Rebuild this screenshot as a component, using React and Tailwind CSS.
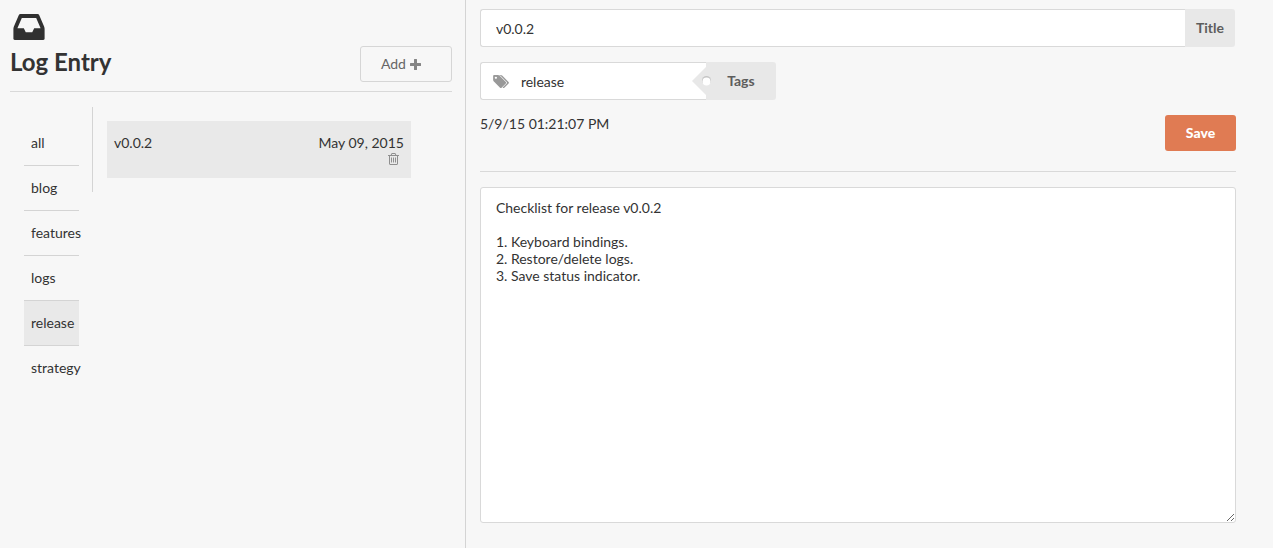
import { useState } from "react";

const TAGS = ["all", "blog", "features", "logs", "release", "strategy"];

const BODY = `Checklist for release v0.0.2

1. Keyboard bindings.
2. Restore/delete logs.
3. Save status indicator.`;

function InboxIcon({ className }) {
  return (
    <svg viewBox="0 128 1536 1280" fill="currentColor" aria-hidden="true" className={className}>
      <path d="M1023 832h316q-1-3-2.500-8t-2.500-8l-212-496h-708l-212 496q-1 2-2.500 8t-2.500 8h316l95 192h320zm513 30v482q0 26-19 45t-45 19h-1408q-26 0-45-19t-19-45v-482q0-62 25-123l238-552q10-25 36.500-42t52.500-17h832q26 0 52.500 17t36.500 42l238 552q25 61 25 123z" />
    </svg>
  );
}

function PlusIcon({ className }) {
  return (
    <svg viewBox="0 0 11 11" fill="currentColor" aria-hidden="true" className={className}>
      <path d="M4.500 0h2q.5 0 .5.500v3.500h3.500q.5 0 .5.500v2q0 .5-.5.500h-3.500v3.500q0 .5-.5.500h-2q-.5 0-.5-.5v-3.500h-3.500q-.5 0-.5-.5v-2q0-.5.5-.5h3.500v-3.500q0-.5.5-.5z" />
    </svg>
  );
}

function TagsIcon({ className }) {
  return (
    <svg viewBox="0 128 1835 1515" fill="currentColor" aria-hidden="true" className={className}>
      <path d="M448 448q0-53-37.500-90.500t-90.500-37.500-90.500 37.500-37.500 90.500 37.500 90.500 90.500 37.500 90.500-37.500 37.500-90.500zm1067 576q0 53-37 90l-491 492q-39 37-91 37-53 0-90-37l-715-716q-38-37-64.500-101t-26.500-117v-416q0-52 38-90t90-38h416q53 0 117 26.500t102 64.500l715 714q37 39 37 91zm320 0q0 53-37 90l-491 492q-39 37-91 37-36 0-59-14t-53-45l470-470q37-37 37-90 0-52-37-91l-715-714q-38-38-102-64.500t-117-26.500h224q53 0 117 26.500t102 64.500l715 714q37 39 37 91z" />
    </svg>
  );
}

function TrashIcon({ className }) {
  return (
    <svg viewBox="0 128 1408 1536" fill="currentColor" aria-hidden="true" className={className}>
      <path d="M512 736v576q0 14-9 23t-23 9h-64q-14 0-23-9t-9-23v-576q0-14 9-23t23-9h64q14 0 23 9t9 23zm256 0v576q0 14-9 23t-23 9h-64q-14 0-23-9t-9-23v-576q0-14 9-23t23-9h64q14 0 23 9t9 23zm256 0v576q0 14-9 23t-23 9h-64q-14 0-23-9t-9-23v-576q0-14 9-23t23-9h64q14 0 23 9t9 23zm128 724v-948h-896v948q0 22 7 40.500t14.500 27 10.500 8.500h832q3 0 10.500-8.500t14.500-27 7-40.500zm-672-1076h448l-48-117q-7-9-17-11h-317q-10 2-17 11zm928 32v64q0 14-9 23t-23 9h-96v948q0 83-47 143.500t-113 60.500h-832q-66 0-113-58.500t-47-141.500v-952h-96q-14 0-23-9t-9-23v-64q0-14 9-23t23-9h309l70-167q15-37 54-63t79-26h320q40 0 79 26t54 63l70 167h309q14 0 23 9t9 23z" />
    </svg>
  );
}

function Sidebar() {
  const [active, setActive] = useState("release");
  return (
    <aside className="w-[36.6%] shrink-0 border-r border-[#d4d4d4] pt-3.5 pr-[13px] pl-2.5">
      <header className="border-b border-[#d9d9d9] pb-[9px]">
        <InboxIcon className="ml-[3px] h-[26px] w-8 text-[#303030]" />
        <div className="mt-1.5 flex items-start justify-between">
          <h1 className="text-2xl leading-8 font-bold text-[#333]">Log Entry</h1>
          <button
            type="button"
            className="flex h-9 w-[92px] items-center justify-center gap-1 rounded-[3px] border border-[#d6d6d6] pr-2.5 text-[#666]"
          >
            Add
            <PlusIcon className="size-[11px] text-[#858585]" />
          </button>
        </div>
      </header>
      <div className="flex items-start pt-[15px]">
        <nav aria-label="Tags" className="ml-3.5 w-[55px] shrink-0 pt-3.5">
          <ul>
            {TAGS.map((tag) => (
              <li key={tag} className="border-b border-[#d4d4d4] last:border-b-0">
                <button
                  type="button"
                  aria-pressed={tag === active}
                  onClick={() => setActive(tag)}
                  className={
                    tag === active
                      ? "block h-11 w-full bg-[#e9e9e9] px-[7px] text-left whitespace-nowrap"
                      : "block h-11 w-full px-[7px] text-left whitespace-nowrap"
                  }
                >
                  {tag}
                </button>
              </li>
            ))}
          </ul>
        </nav>
        <div className="ml-[13px] min-w-0 flex-1 border-l border-[#d4d4d4] py-3.5 pr-[41px] pl-3.5">
          <article className="flex h-[57px] justify-between bg-[#e9e9e9] px-[7px] pt-3.5">
            <h2 className="leading-4">v0.0.2</h2>
            <div className="flex flex-col items-end">
              <time dateTime="2015-05-09" className="leading-4">May 09, 2015</time>
              <button type="button" aria-label="Delete entry" className="mt-0.5 mr-[5px] text-[#8f8f8f]">
                <TrashIcon className="h-3 w-[11px]" />
              </button>
            </div>
          </article>
        </div>
      </div>
    </aside>
  );
}

function Editor() {
  return (
    <main className="min-w-0 flex-1 pt-[9px] pr-[37px] pb-6 pl-3.5">
      <div className="mr-px flex h-[38px]">
        <input
          id="title"
          defaultValue="v0.0.2"
          className="min-w-0 flex-1 rounded-l-[3px] border border-r-0 border-[#d9d9d9] bg-white px-[15px] pt-0.5 outline-none"
        />
        <label
          htmlFor="title"
          className="flex w-[50px] items-center justify-center rounded-r-[3px] bg-[#e8e8e8] font-bold text-[#5d5d5d]"
        >
          Title
        </label>
      </div>
      <div className="mt-[15px] flex h-[38px] w-[296px]">
        <div className="flex min-w-0 flex-1 items-center rounded-l-[3px] border border-r-0 border-[#d9d9d9] bg-white pl-3">
          <TagsIcon className="h-[13px] w-4 shrink-0 text-[#999]" />
          <input id="tags" defaultValue="release" className="ml-3 w-full min-w-0 pt-0.5 outline-none" />
        </div>
        <label
          htmlFor="tags"
          className="relative flex w-[70px] items-center justify-center rounded-r-[3px] bg-[#e8e8e8] font-bold text-[#5d5d5d]"
        >
          <svg viewBox="0 0 20 28" aria-hidden="true" className="absolute top-[5px] -left-3.5 h-7 w-5">
            <path d="M14 0v28L0 14z" fill="#e8e8e8" />
            <circle cx="14.500" cy="13.500" r="4.500" fill="#c4c4c4" />
            <circle cx="14.500" cy="14.500" r="4" fill="#fff" />
          </svg>
          Tags
        </label>
      </div>
      <div className="mt-[15px] flex items-start justify-between border-b border-[#d9d9d9] pb-5">
        <p className="leading-[18px]">5/9/15 01:21:07 PM</p>
        <button type="button" className="h-9 w-[71px] rounded-[3px] bg-[#e07b53] font-black text-white">
          Save
        </button>
      </div>
      <textarea
        aria-label="Entry text"
        defaultValue={BODY}
        className="mt-[15px] block h-[336px] w-full resize rounded-[3px] border border-[#d9d9d9] bg-white px-[15px] py-[11px] leading-[17px] outline-none"
      />
    </main>
  );
}

export default function App() {
  return (
    <div className="flex min-h-screen bg-[#f7f7f7] font-['Lato',sans-serif] text-sm text-[#333]">
      <Sidebar />
      <Editor />
    </div>
  );
}
